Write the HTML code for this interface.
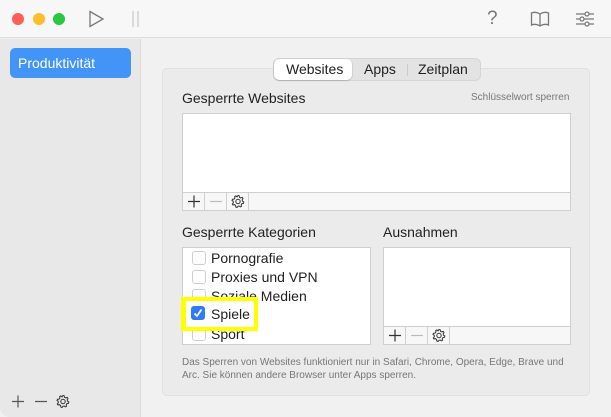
<!DOCTYPE html><html><head><meta charset="utf-8"><style>
*{margin:0;padding:0;box-sizing:border-box}
body{width:611px;height:417px;overflow:hidden;background:#f1f1f1;font-family:"Liberation Sans",sans-serif;position:relative;color:#222}
.a{position:absolute}
.dot{position:absolute;top:13px;width:12px;height:12px;border-radius:50%}
.box{position:absolute;background:#fff;border:1px solid #cfcfcf}
.bar{position:absolute;left:0;right:0;bottom:0;height:18px;border-top:1px solid #cfcfcf;background:#f7f7f7;display:flex}
.bar div{width:22px;height:17px;border-right:1px solid #cfcfcf;position:relative}
.bar svg{position:absolute;left:4px;top:1px}
.cb{position:absolute;left:9px;width:14px;height:14px;border:1px solid #cfcfcf;border-radius:3px;background:#fff}
.lbl{position:absolute;left:28px;font-size:14px;color:#222}
</style></head><body>
<svg width="0" height="0" style="position:absolute"><defs>
<g id="gear" fill="none" stroke="#333" stroke-width="1"><path d="M7 1.5L8.2 1.8L8.5 3.3L9.8 4L11.2 3.4L12 4.5L11.2 5.8L11.5 7.2L12.8 8L12.5 9.3L11 9.6L10.2 10.9L10.5 12.3L9.4 12.9L8.2 12L7 12.3L6 13.5L4.8 13L4.6 11.5L3.4 10.6L2 11L1.3 9.9L2.3 8.8L2.2 7.3L1 6.4L1.5 5.2L3 5.1L3.9 4L3.7 2.5L4.9 1.9L6 2.9Z"/><circle cx="7" cy="7.5" r="2.2"/></g>
</defs></svg>
<div class="a" style="left:0;top:0;width:611px;height:38px;background:#f7f7f7;border-bottom:1px solid #dcdcdc"></div>
<div class="dot" style="left:12px;background:#fe5f57"></div>
<div class="dot" style="left:33px;background:#febc2e"></div>
<div class="dot" style="left:53px;background:#28c840"></div>
<svg class="a" style="left:88px;top:10px" width="18" height="18"><path d="M2 1.5 L15 9 L2 16.5 Z" fill="none" stroke="#777" stroke-width="1.3"/></svg>
<svg class="a" style="left:131px;top:10px" width="10" height="18"><path d="M2 1V17M7 1V17" stroke="#c8c8c8" stroke-width="1.2"/></svg>
<div class="a" style="left:487px;top:8px;font-size:19px;color:#777">?</div>
<svg class="a" style="left:530px;top:11px" width="20" height="16"><path d="M10 3C7 1 4 1 1.5 2V14C4 13 7 13 10 15C13 13 16 13 18.5 14V2C16 1 13 1 10 3ZM10 3V15" fill="none" stroke="#777" stroke-width="1.3"/></svg>
<svg class="a" style="left:575px;top:10px" width="20" height="18"><g stroke="#777" stroke-width="1.2" fill="#f7f7f7"><path d="M1 4H19M1 9H19M1 14H19"/><circle cx="12" cy="4" r="2"/><circle cx="7" cy="9" r="2"/><circle cx="12" cy="14" r="2"/></g></svg>
<div class="a" style="left:0;top:39px;width:141px;height:378px;background:#e8e8e8;border-right:1px solid #dcdcdc;border-bottom-left-radius:10px"></div>
<div class="a" style="left:10px;top:48px;width:121px;height:30px;background:#4394f7;border-radius:5px;color:#fff;font-size:14px;line-height:30px;padding-left:8px">Produktivität</div>
<svg class="a" style="left:11px;top:394px" width="60" height="16"><path d="M1 7.5H13M7 1.5V13.5M24 7.5H36" stroke="#555" stroke-width="1.2"/><g transform="translate(45,0)"><use href="#gear"/></g></svg>
<div class="a" style="left:162px;top:68px;width:428px;height:328px;background:#ebebeb;border:1px solid #e0e0e0;border-radius:5px"></div>
<div class="a" style="left:273px;top:58px;width:208px;height:23px;background:#e3e3e3;border:1px solid #d5d5d5;border-radius:6px"></div>
<div class="a" style="left:274px;top:59px;width:78px;height:21px;background:#fff;border-radius:5px;box-shadow:0 0.5px 1.5px rgba(0,0,0,.3)"></div>
<div class="a" style="left:286px;top:61px;font-size:14px">Websites</div>
<div class="a" style="left:364px;top:61px;font-size:14px">Apps</div>
<div class="a" style="left:407px;top:64px;width:1px;height:12px;background:#ccc"></div>
<div class="a" style="left:418px;top:61px;font-size:14px">Zeitplan</div>
<div class="a" style="left:182px;top:90px;font-size:14px">Gesperrte Websites</div>
<div class="a" style="left:471px;top:92px;font-size:10px;color:#777">Schlüsselwort sperren</div>
<div class="box" style="left:182px;top:113px;width:389px;height:98px"><div class="bar"><div><svg width="14" height="14"><path d="M1 7.5H13M7 1.5V13.5" stroke="#333" stroke-width="1.2"/></svg></div><div><svg width="14" height="14"><path d="M1 7.5H13" stroke="#bbb" stroke-width="1.2"/></svg></div><div><svg width="14" height="15"><use href="#gear"/></svg></div></div></div>
<div class="a" style="left:182px;top:224px;font-size:14px">Gesperrte Kategorien</div>
<div class="a" style="left:383px;top:224px;font-size:14px">Ausnahmen</div>
<div class="box" style="left:182px;top:247px;width:189px;height:98px;overflow:hidden">
<div class="cb" style="top:3px"></div><div class="lbl" style="top:2px">Pornografie</div>
<div class="cb" style="top:22px"></div><div class="lbl" style="top:21px">Proxies und VPN</div>
<div class="cb" style="top:41px"></div><div class="lbl" style="top:40px">Soziale Medien</div>
<div class="cb" style="top:79px"></div><div class="lbl" style="top:78px">Sport</div>
</div>
<div class="a" style="left:181px;top:297px;width:77px;height:34px;background:#ffff00"></div>
<div class="a" style="left:186px;top:301px;width:68px;height:26px;background:#fff"></div>
<div class="a" style="left:191px;top:306px;width:14px;height:14px;background:#2f7bf5;border-radius:3px"></div>
<svg class="a" style="left:191px;top:306px" width="14" height="14"><path d="M3.5 7.5L6 10L10.5 3.5" fill="none" stroke="#fff" stroke-width="1.8"/></svg>
<div class="a" style="left:211px;top:306px;font-size:14px">Spiele</div>
<div class="box" style="left:383px;top:247px;width:188px;height:98px"><div class="bar"><div><svg width="14" height="14"><path d="M1 7.5H13M7 1.5V13.5" stroke="#333" stroke-width="1.2"/></svg></div><div><svg width="14" height="14"><path d="M1 7.5H13" stroke="#bbb" stroke-width="1.2"/></svg></div><div><svg width="14" height="15"><use href="#gear"/></svg></div></div></div>
<div class="a" style="left:182px;top:357px;font-size:10px;color:#777;line-height:12.5px;width:385px">Das Sperren von Websites funktioniert nur in Safari, Chrome, Opera, Edge, Brave und Arc. Sie können andere Browser unter Apps sperren.</div>
</body></html>
